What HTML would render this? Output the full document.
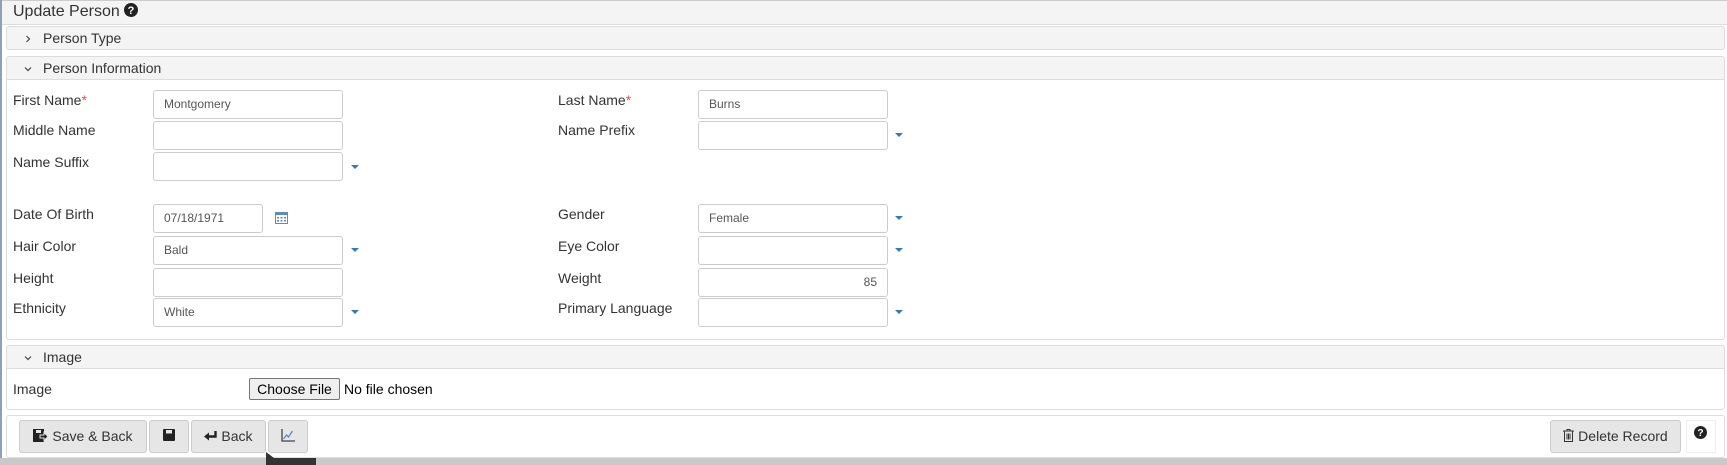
<!DOCTYPE html>
<html><head><style>
body{margin:0;width:1727px;height:465px;overflow:hidden;background:#fff;font-family:"Liberation Sans",Arial,sans-serif;color:#333;position:relative}
.a{position:absolute}
.hdr{position:absolute;left:6px;right:2px;height:24px;background:#f4f4f4;border:1px solid #ddd;border-radius:3px;font-size:14px;line-height:24px;box-sizing:border-box}
.hdr span{position:absolute;left:36px;top:-1px}
.hdr svg{position:absolute;left:17px;top:8px}
.panel{position:absolute;left:6px;right:2px;border:1px solid #ddd;border-radius:3px;box-sizing:border-box}
.lb{position:absolute;font-size:14px;color:#333}
.lb b{color:#d9534f;font-weight:normal}
.in{position:absolute;width:190px;height:29px;border:1px solid #ccc;border-radius:3px;box-sizing:border-box;font-size:12px;line-height:27px;padding:0 10px;color:#555}
.car{position:absolute;width:0;height:0;border-left:4px solid transparent;border-right:4px solid transparent;border-top:4px solid #337ab7}
.btn{position:absolute;top:420px;height:33px;background:#e6e6e6;border:1px solid #ccc;border-radius:3px;box-sizing:border-box;font-size:14px;line-height:31px;text-align:center;color:#333}
</style></head><body>
<div class="a" style="left:0;top:0;width:2px;height:465px;background:#8da0b8"></div>
<div class="a" style="left:0;top:458px;width:1727px;height:7px;background:#c9c9c9"></div>
<div class="a" style="left:2px;top:0;right:0;height:25px;background:#f4f4f4;border-bottom:1px solid #ddd;border-top:1px solid #ccc;box-sizing:border-box"></div>
<div class="a" style="left:13px;top:3px;font-size:16px;color:#333">Update Person <svg width="14" height="14" viewBox="0 0 14 14" style="vertical-align:-1px"><circle cx="7" cy="7" r="7" fill="#222"/><text x="7" y="11" font-size="11" font-weight="bold" fill="#fff" text-anchor="middle" font-family="Liberation Sans">?</text></svg></div>

<div class="hdr" style="top:26px"><svg width="8" height="8" viewBox="0 0 8 8"><path d="M2.5 1l3 3-3 3" fill="none" stroke="#444" stroke-width="1.2"/></svg><span>Person Type</span></div>
<div class="panel" style="top:56px;height:284px"></div>
<div class="hdr" style="top:56px;border-radius:3px 3px 0 0"><svg width="8" height="8" viewBox="0 0 8 8"><path d="M1 2.5l3 3 3-3" fill="none" stroke="#444" stroke-width="1.2"/></svg><span>Person Information</span></div>

<div class="lb" style="left:13px;top:92px">First Name<b>*</b></div>
<div class="in" style="left:153px;top:90px">Montgomery</div>
<div class="lb" style="left:558px;top:92px">Last Name<b>*</b></div>
<div class="in" style="left:698px;top:90px">Burns</div>

<div class="lb" style="left:13px;top:122px">Middle Name</div>
<div class="in" style="left:153px;top:121px"></div>
<div class="lb" style="left:558px;top:122px">Name Prefix</div>
<div class="in" style="left:698px;top:121px"></div><div class="car" style="left:895px;top:133px"></div>

<div class="lb" style="left:13px;top:154px">Name Suffix</div>
<div class="in" style="left:153px;top:152px"></div><div class="car" style="left:351px;top:165px"></div>

<div class="lb" style="left:13px;top:206px">Date Of Birth</div>
<div class="in" style="left:153px;top:204px;width:110px">07/18/1971</div>
<svg class="a" style="left:275px;top:212px" width="13" height="12" viewBox="0 0 13 12"><rect x="0.5" y="0.5" width="12" height="11" fill="none" stroke="#5b8ac6"/><rect x="0.5" y="0.5" width="12" height="2.5" fill="#5b8ac6"/><g fill="#5b8ac6"><rect x="2" y="5" width="2" height="1.5"/><rect x="5.5" y="5" width="2" height="1.5"/><rect x="9" y="5" width="2" height="1.5"/><rect x="2" y="8" width="2" height="1.5"/><rect x="5.5" y="8" width="2" height="1.5"/><rect x="9" y="8" width="2" height="1.5"/></g></svg>
<div class="lb" style="left:558px;top:206px">Gender</div>
<div class="in" style="left:698px;top:204px">Female</div><div class="car" style="left:895px;top:216px"></div>

<div class="lb" style="left:13px;top:238px">Hair Color</div>
<div class="in" style="left:153px;top:236px">Bald</div><div class="car" style="left:351px;top:248px"></div>
<div class="lb" style="left:558px;top:238px">Eye Color</div>
<div class="in" style="left:698px;top:236px"></div><div class="car" style="left:895px;top:248px"></div>

<div class="lb" style="left:13px;top:270px">Height</div>
<div class="in" style="left:153px;top:268px"></div>
<div class="lb" style="left:558px;top:270px">Weight</div>
<div class="in" style="left:698px;top:268px;text-align:right">85</div>

<div class="lb" style="left:13px;top:300px">Ethnicity</div>
<div class="in" style="left:153px;top:298px">White</div><div class="car" style="left:351px;top:310px"></div>
<div class="lb" style="left:558px;top:300px">Primary Language</div>
<div class="in" style="left:698px;top:298px"></div><div class="car" style="left:895px;top:310px"></div>

<div class="panel" style="top:345px;height:65px"></div>
<div class="hdr" style="top:345px;border-radius:3px 3px 0 0"><svg width="8" height="8" viewBox="0 0 8 8"><path d="M1 2.5l3 3 3-3" fill="none" stroke="#444" stroke-width="1.2"/></svg><span>Image</span></div>
<div class="lb" style="left:13px;top:381px">Image</div>
<div class="a" style="left:249px;top:378px;width:91px;height:22px;background:#efefef;border:1px solid #767676;border-radius:2px;box-sizing:border-box;font-size:14px;line-height:20px;text-align:center;color:#000">Choose File</div>
<div class="a" style="left:344px;top:381px;font-size:14px;color:#000">No file chosen</div>

<div class="panel" style="top:415px;height:43px"></div>
<div class="btn" style="left:19px;width:128px"><svg width="15" height="13" viewBox="0 0 15 13" style="vertical-align:-1px"><rect x="0" y="0" width="11" height="13" fill="#222"/><rect x="3" y="1" width="5" height="3" fill="#e6e6e6"/><path d="M7 6h4V3.5L15 7.5 11 11.5V9H7z" fill="#222" stroke="#e6e6e6" stroke-width="1"/></svg> Save &amp; Back</div>
<div class="btn" style="left:149px;width:40px"><svg width="12" height="12" viewBox="0 0 12 12" style="vertical-align:0"><rect width="12" height="12" rx="1" fill="#222"/><rect x="3" y="1" width="6" height="3.5" fill="#e6e6e6"/></svg></div>
<div class="btn" style="left:191px;width:75px"><svg width="13" height="11" viewBox="0 0 13 11" style="vertical-align:-1px"><path d="M11.5 0v5.5H4" fill="none" stroke="#222" stroke-width="2.4"/><path d="M0 5.5L5 1.5v8z" fill="#222"/></svg> Back</div>
<div class="btn" style="left:268px;width:40px"><svg width="14" height="13" viewBox="0 0 14 13" style="vertical-align:-1px"><path d="M1 0v12h13" fill="none" stroke="#444" stroke-width="1.3"/><path d="M2.5 10l3-4 2 2 4-6" fill="none" stroke="#5b8ac6" stroke-width="1.3"/></svg></div>
<div class="a" style="left:266px;top:458px;width:50px;height:7px;background:#333"></div>
<div class="a" style="left:266px;top:452px;width:0;height:0;border-right:8px solid transparent;border-bottom:6px solid #333"></div>
<div class="btn" style="left:1550px;width:131px"><svg width="11" height="13" viewBox="0 0 11 13" style="vertical-align:-1px"><path d="M0 2h11M4 2V0.5h3V2M1.5 2.5V12.5h8V2.5M4 4.5v6M5.5 4.5v6M7 4.5v6" fill="none" stroke="#333" stroke-width="1"/></svg> Delete Record</div>
<div class="a" style="left:1686px;top:420px;width:30px;height:33px;border:1px solid #eee;box-sizing:border-box;background:#fff"></div>
<svg class="a" style="left:1694px;top:426px" width="13" height="13" viewBox="0 0 14 14"><circle cx="7" cy="7" r="7" fill="#222"/><text x="7" y="11" font-size="11" font-weight="bold" fill="#fff" text-anchor="middle" font-family="Liberation Sans">?</text></svg>
</body></html>
